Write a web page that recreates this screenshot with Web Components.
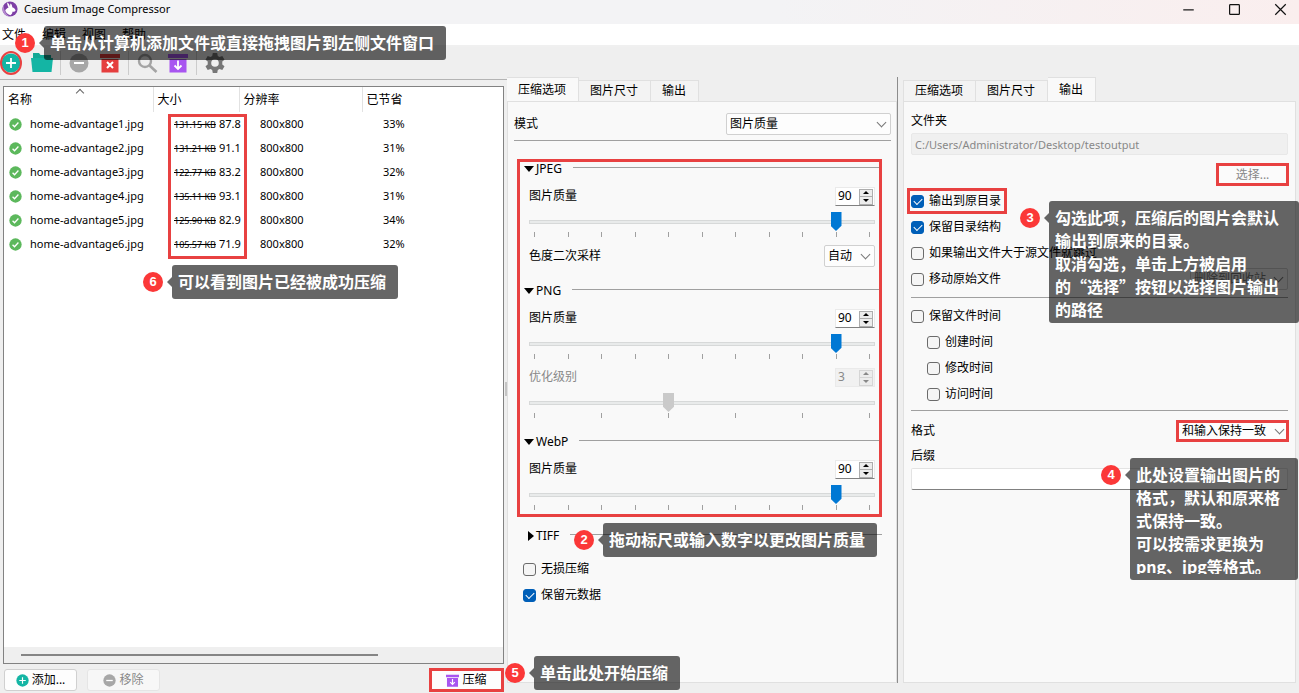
<!DOCTYPE html>
<html lang="zh-CN">
<head>
<meta charset="utf-8">
<title>Caesium Image Compressor</title>
<style>
  body { margin: 0; overflow: hidden; font: 12px/18px "Noto Sans", "Noto Sans CJK SC", sans-serif; color: #000; background: #efefef; }
</style>
</head>
<body>
<app-window></app-window>
<script>
const define = (name, css, html, setup) => customElements.define(name, class extends HTMLElement {
  connectedCallback() {
    if (this.shadowRoot) return;
    const root = this.attachShadow({ mode: "open" });
    const base = `*{box-sizing:border-box} button,input,select{font:inherit;color:inherit;margin:0;padding:0}
      .red{border:3px solid #e84141}`;
    root.innerHTML = `<style>${base}${css}</style>${typeof html === "function" ? html(this) : html}`;
    if (setup) setup(root, this);
  }
});

const icons = {
  logo: `<circle cx="10" cy="10" r="9.500" fill="#7d3fa6"/><path d="M2 5a9.500 9.500 0 000 10 9.500 9.500 0 008 4.500c-4-2-8-7-8-14.500z" fill="#b58bd0"/><path d="M6.500 1.500c2 1.500 3.200 3.500 3.500 5.500.3-1.800 0-3 .8-4 1.500 1.200 2 3 2 4.800 2 .6 4 2.200 4.200 4-.8 1.500-2.500 1.700-4 1.700.2 2-.8 3.500-2.500 4.300-3-.5-5.500-2.800-6.500-5.800.8-2 2.500-3.500 4.200-4-1.200-2-1.900-4.500-1.700-6.500z" fill="#fff"/>`,
  add: `<circle cx="10" cy="10" r="9.5" fill="#14b5a4"/><path d="M10 5v10M5 10h10" stroke="#fff" stroke-width="1.8"/>`,
  folder: `<path d="M1 0h6l1.500 2h10.500v4h-18z" fill="#12a896"/><path d="M-1 5h22l-1.500 14h-19z" fill="#14b5a4"/>`,
  minus: `<circle cx="10" cy="10" r="9.500" fill="#a7a7a7"/><path d="M5 10h10" stroke="#fff" stroke-width="2"/>`,
  clear: `<path d="M0 1h20v4H0zM1.500 6h17v13.500h-17z" fill="#e53e3e"/><path d="M7 9l6 6M13 9l-6 6" stroke="#fff" stroke-width="2"/>`,
  search: `<circle cx="8" cy="8" r="6" fill="none" stroke="#a4a4a4" stroke-width="2.400"/><path d="M12.500 12.500l7 6.500" stroke="#a4a4a4" stroke-width="2.600"/>`,
  down: `<path d="M0 1h20v4H0zM1.500 6h17v13.500h-17z" fill="#a855f0"/><path d="M10 7.500v8M6.500 12.500l3.500 3.500 3.500-3.500" fill="none" stroke="#fff" stroke-width="1.800"/>`,
  gear: `<path fill="#777" fill-rule="evenodd" d="M7.800 0h4.400l.6 2.900 1.700 1 2.800-1 2.200 3.800-2.200 1.900v2.800l2.200 1.900-2.200 3.800-2.800-1-1.700 1-.6 2.900H7.800l-.6-2.900-1.700-1-2.800 1L.5 13.300l2.200-1.900V8.600L.5 6.700l2.200-3.800 2.800 1 1.700-1zM10 6.200a3.800 3.800 0 100 7.600 3.800 3.800 0 000-7.600z"/>`,
  done: `<circle cx="10" cy="10" r="9.500" fill="#5cb85c"/><path d="M5.500 10.500l3 3 6-6.500" fill="none" stroke="#fff" stroke-width="2"/>`,
  min: `<path d="M3 10.500h14" stroke="#111" stroke-width="1.600"/>`,
  max: `<rect x="3.500" y="3.500" width="13" height="13" rx="1" fill="none" stroke="#111" stroke-width="1.600"/>`,
  close: `<path d="M3 3l14 14M17 3L3 17" stroke="#111" stroke-width="1.600"/>`
};
define("ui-icon", `:host{display:inline-block;flex:none;width:20px;height:20px} svg{display:block;width:100%;height:100%;overflow:visible}`,
  h => `<svg viewBox="0 0 20 20" aria-hidden="true">${icons[h.getAttribute("name")]}</svg>`);

/* numbered badge with a translucent speech bubble */
define("call-out", `:host{position:absolute;z-index:5;display:flex;gap:9px;font:bold 16px/23px "Noto Sans CJK SC",sans-serif;color:#fff;white-space:nowrap}
  .n{width:20px;height:20px;margin-top:7px;border-radius:50%;background:#fb3838;font:bold 13px/20px "Liberation Sans",sans-serif;text-align:center}
  .b{position:relative;min-height:34px;padding:5px 12px 6px 6px;border-radius:3px;background:rgba(0,0,0,.6)}
  .b::before{content:"";position:absolute;left:-5px;top:12px;border:5px solid transparent;border-left:0;border-right-color:rgba(0,0,0,.6)}
  .t{overflow:hidden}
  :host([tall]) .b{width:250px;padding-bottom:2px}
  :host([clipped]) .b{width:168px}
  :host([clipped]) .t{height:111px}`,
  h => `<span class="n">${h.getAttribute("n")}</span><div class="b"><div class="t"><slot></slot></div></div>`);

define("title-bar", `:host{display:flex;align-items:center;height:24px;padding:0 11px 6px 2px;background:linear-gradient(90deg,#f3f3f5 60%,#faeeee)}
  span{flex:1;padding-left:6px;font-size:11px} .w{display:flex;gap:31px} button{border:0;background:none;width:15px;height:15px} .w ui-icon{width:15px;height:15px} .l{width:16px;height:16px}`,
  `<ui-icon class="l" name="logo"></ui-icon><span>Caesium Image Compressor</span><div class="w">
  <button aria-label="最小化"><ui-icon name="min"></ui-icon></button><button aria-label="最大化"><ui-icon name="max"></ui-icon></button><button aria-label="关闭"><ui-icon name="close"></ui-icon></button></div>`);

define("menu-bar", `:host{display:flex;gap:16px;height:23px;padding:2px 2px 0;background:#fff;border-bottom:2px solid #f0f0f0} button{border:0;background:none;height:18px}`,
  `<button>文件</button><button>编辑</button><button>视图</button><button>帮助</button>`);

define("tool-bar", `:host{display:flex;align-items:center;height:30px;padding-top:2px}
  button{position:relative;border:0;background:none;display:flex;width:20px;height:20px;margin-left:11px}
  button.first{margin-left:1px} .first::after{content:"";position:absolute;inset:-2px -1px;border:2px solid #e84141;border-radius:50%}
  i{width:1px;height:24px;margin-left:8px;background:#ccc} i+button{margin-left:8px}`,
  `<button class="first" aria-label="添加文件"><ui-icon name="add"></ui-icon></button><button aria-label="添加文件夹"><ui-icon name="folder"></ui-icon></button><i></i>
  <button aria-label="移除"><ui-icon name="minus"></ui-icon></button><button aria-label="清空"><ui-icon name="clear"></ui-icon></button><i></i>
  <button aria-label="预览"><ui-icon name="search"></ui-icon></button><button aria-label="压缩"><ui-icon name="down"></ui-icon></button><i></i>
  <button aria-label="设置"><ui-icon name="gear"></ui-icon></button>`);

const files = [["131.15", "87.8", 33], ["131.21", "91.1", 31], ["122.77", "83.2", 32], ["135.11", "93.1", 31], ["125.90", "82.9", 34], ["105.57", "71.9", 32]];
define("file-list", `:host{position:relative;display:flex;flex-direction:column;flex:1;background:#fff;border:1px solid #828282}
  table{table-layout:fixed;width:100%;border-collapse:collapse}
  th{position:relative;height:25px;padding:0 0 0 4px;text-align:left;font-weight:400;border-right:1px solid #e2e2e2} th:last-child{border:0}
  .sort::after{content:"";position:absolute;left:73px;top:3px;width:5px;height:5px;border:solid #666;border-width:1px 0 0 1px;transform:rotate(45deg)}
  td{height:24px;padding:0 0 0 21px;white-space:nowrap;font-size:11px} td:first-child{padding-left:5px}
  .f{display:flex;align-items:center;gap:8px} .f ui-icon{width:13px;height:13px}
  s{font-size:9px;margin-right:3px}
  .mark{position:absolute;left:164px;top:27px;width:79px;height:145px}
  .bar{margin-top:auto;height:16px;padding:7px 0 0 17px;background:#efefef} .bar div{width:357px;height:2px;background:#858585}`,
  `<table><colgroup><col style="width:149px"><col style="width:86px"><col style="width:123px"><col></colgroup>
  <thead><tr><th class="sort">名称</th><th>大小</th><th>分辨率</th><th>已节省</th></tr></thead><tbody>` +
  files.map((f, i) => `<tr><td><span class="f"><ui-icon name="done"></ui-icon>home-advantage${i + 1}.jpg</span></td><td><s>${f[0]} KB</s>${f[1]}</td><td>800x800</td><td>${f[2]}%</td></tr>`).join("") +
  `</tbody></table><div class="mark red"></div><div class="bar"><div></div></div><call-out n="6" style="left:139px;top:178px">可以看到图片已经被成功压缩</call-out>`);

define("list-column", `:host{position:relative;display:flex;flex-direction:column;flex:501 1 6px;min-width:0;margin-top:2px;padding:6px 3px 0;border-top:1px solid #b4b4b4}
  footer{display:flex;gap:10px;padding:4px 0 1px 1px;height:29px;align-items:center}
  button{display:flex;align-items:center;justify-content:center;gap:3px;width:73px;height:22px;background:#fdfdfd;border:1px solid #d0d0d0;border-radius:3px}
  button ui-icon{width:13px;height:13px} button:disabled{color:#888;background:#f7f7f7;border-color:#e5e5e5}
  .go{margin-left:auto;width:75px;height:24px;border:3px solid #e84141;border-radius:0}
  .grip{position:absolute;right:0;top:302px;width:2px;height:14px;background:#c4c4c4}`,
  `<file-list></file-list><footer><button><ui-icon name="add"></ui-icon>添加...</button><button disabled><ui-icon name="minus"></ui-icon>移除</button><button class="go"><ui-icon name="down"></ui-icon>压缩</button></footer>
  <div class="grip"></div><call-out n="5" style="left:505px;bottom:3px">单击此处开始压缩</call-out>`);

define("tab-panel", `:host{display:flex;flex-direction:column;min-width:0}
  nav{display:flex;align-items:flex-end;height:24px}
  button{height:21px;padding:0 12px 0 11px;border:1px solid #e0e0e0;border-left-width:0;border-bottom:0;background:#f3f3f3}
  button:first-child{border-left-width:var(--edge,0)}
  button[aria-selected=true]{height:25px;margin-bottom:-1px;background:#f9f9f9;position:relative}
  .p{flex:1;position:relative;border:1px solid #e0e0e0;background:#f9f9f9}`,
  h => `<nav role="tablist">${["压缩选项", "图片尺寸", "输出"].map((t, i) => `<button role="tab" aria-selected="${i == h.getAttribute("active")}">${t}</button>`).join("")}</nav><div class="p"><slot></slot></div>`);

define("drop-down", `:host{display:flex;align-items:center;justify-content:space-between}
  span{position:relative;width:var(--w)} select{appearance:none;display:block;width:100%;height:22px;padding:0 3px;border:1px solid #d0d0d0;border-radius:2px;background:#fdfdfd;line-height:20px}
  select.red{border:3px solid #e84141;border-radius:0;line-height:16px} select:disabled{opacity:1;color:#777;background:#f7f7f7}
  span::after{content:"";position:absolute;right:6px;top:6px;width:6px;height:6px;border:solid #777;border-width:0 1px 1px 0;transform:rotate(45deg);pointer-events:none}`,
  h => `<label for="s">${h.getAttribute("label") || ""}</label><span><select id="s" aria-label="${h.getAttribute("label") || "移动方式"}" class="${h.hasAttribute("marked") ? "red" : ""}" ${h.hasAttribute("disabled") ? "disabled" : ""}><option>${h.getAttribute("value")}</option></select></span>`);

define("check-box", `:host{display:flex;align-items:center;height:26px}
  label{display:flex;align-items:center;gap:5px;white-space:nowrap}
  label.red{margin:0 0 0 -4px;padding:0 3px 0 1px;height:26px}
  input{appearance:none;position:relative;width:13px;height:13px;border:1px solid #6b6b6b;border-radius:3px;background:#f5f5f5}
  input:checked{background:#005fb8;border-color:#005fb8}
  input:checked::after{content:"";position:absolute;left:2px;top:2px;width:7px;height:4px;border:solid #fff;border-width:0 0 1px 1px;transform:rotate(-45deg)}`,
  h => `<label class="${h.hasAttribute("marked") ? "red" : ""}"><input type="checkbox" ${h.hasAttribute("checked") ? "checked" : ""}><slot></slot></label>`);

/* label and number box over a range input with tick marks */
define("quality-control", `:host{display:block} .r{display:flex;align-items:center;justify-content:space-between;height:20px}
  .s{display:flex;width:40px;height:19px;background:#fff;border:1px solid #eaeaea;border-bottom-color:#808080}
  input[type=number]{appearance:textfield;flex:1;min-width:0;border:0;background:none;padding-left:2px;outline:0}
  input::-webkit-inner-spin-button{appearance:none;display:none}
  .b{display:flex;flex-direction:column;width:15px;padding:1px 1px 0 0} .b button{flex:1;border:1px solid #adadad;background:#ececec;display:flex;align-items:center;justify-content:center}
  .b button+button{border-top:0} .b button::after{content:"";border:3px solid transparent;border-top:0;border-bottom-color:currentColor} .b button+button::after{transform:rotate(180deg)}
  input[type=range]{appearance:none;display:block;width:100%;height:19px;margin-top:6px;background:linear-gradient(#e9ebeb,#e9ebeb) center/calc(100% - 2px) 2px no-repeat,linear-gradient(#d7d9d9,#d7d9d9) center/100% 4px no-repeat}
  input::-webkit-slider-thumb{appearance:none;width:11px;height:19px;background:var(--c,#0078d4);clip-path:polygon(0 0,100% 0,100% 72%,50% 100%,0 72%)}
  .t{display:flex;justify-content:space-between;height:6px;padding:1px 5px 0} i{width:1px;background:#a0a0a0}
  :host([disabled]){--c:#cacaca;color:#888} :host([disabled]) .s{background:#f1f1f1;border-color:#eaeaea} :host([disabled]) .b button{border-color:#d5d5d5}`,
  h => { const g = (a, d) => h.getAttribute(a) || d, d = h.hasAttribute("disabled") ? "disabled" : "", m = `min="${g("min", 0)}" max="${g("max", 100)}" value="${g("value", 90)}"`;
    return `<div class="r"><label for="n">${g("label")}</label><div class="s"><input id="n" type="number" ${m} ${d}><div class="b"><button aria-label="增加" ${d}></button><button aria-label="减少" ${d}></button></div></div></div>
    <input type="range" aria-label="${g("label")}" ${m} ${d}><div class="t">${"<i></i>".repeat(g("ticks", 11))}</div>`; },
  root => { const [n, r] = root.querySelectorAll("input"), [u, d] = root.querySelectorAll("button");
    n.oninput = () => r.value = n.value; r.oninput = () => n.value = r.value;
    u.onclick = () => { n.stepUp(); r.value = n.value; }; d.onclick = () => { n.stepDown(); r.value = n.value; }; });

define("option-group", `:host{display:block} button{display:flex;align-items:center;width:100%;height:14px;border:0;background:none;padding-left:4px;line-height:14px}
  button::before{content:"";margin-right:2px;border:5px solid transparent;border-bottom:0;border-top:6px solid #000}
  :host([closed]) button::before{border:5px solid transparent;border-right:0;border-left:6px solid #000;margin-left:2px}
  button::after{content:"";flex:1;height:1px;margin:0 0 4px 11px;background:#a0a0a0}
  .c{padding:10px 4px 0 9px} :host([closed]) .c{display:none}`,
  h => `<button aria-expanded="${!h.hasAttribute("closed")}">${h.getAttribute("name")}</button><div class="c"><slot></slot></div>`,
  (root, h) => root.querySelector("button").onclick = () => h.toggleAttribute("closed"));

define("compress-options", `:host{display:block;padding:11px 5px 0 6px}
  .mode{--w:165px} hr{height:1px;border:0;margin:5px 0 18px;background:#a0a0a0}
  section{margin:0 9px 0 3px;padding-bottom:4px} option-group+option-group{margin-top:17px}
  .sub{--w:51px;margin-top:8px} .lvl{margin-top:8px}
  .tiff{margin:12px 9px 0 8px} .checks{margin:13px 0 0 9px}`,
  `<drop-down class="mode" label="模式" value="图片质量"></drop-down><hr>
  <section class="red"><option-group name="JPEG"><quality-control label="图片质量"></quality-control><drop-down class="sub" label="色度二次采样" value="自动"></drop-down></option-group>
  <option-group name="PNG"><quality-control label="图片质量"></quality-control><quality-control class="lvl" label="优化级别" min="1" max="6" value="3" ticks="6" disabled></quality-control></option-group>
  <option-group name="WebP"><quality-control label="图片质量"></quality-control></option-group></section>
  <option-group class="tiff" name="TIFF" closed></option-group>
  <div class="checks"><check-box>无损压缩</check-box><check-box checked>保留元数据</check-box></div>
  <call-out n="2" style="left:66px;top:421px">拖动标尺或输入数字以更改图片质量</call-out>`);

define("output-options", `:host{display:block;padding:10px 7px 0 7px}
  label{display:block} input{display:block;width:100%;height:22px;margin:3px 0 0;padding:0 3px;border:1px solid #e3e3e3;background:#fff;border-bottom-color:#808080;border-radius:2px;outline:0}
  input:disabled{background:#f0f0f0;color:#888;border-color:#e8e8e8;font-size:11px}
  .pick{display:block;width:73px;height:23px;margin:8px -1px 2px auto;background:#fbfbfb;color:#888;line-height:16px}
  hr{height:1px;border:0;margin:5px 0;background:#a0a0a0} .in{margin-left:16px} .in+hr{margin-top:3px}
  .move{display:flex;justify-content:space-between;align-items:center} .move drop-down{--w:98px}
  .fmt{--w:113px;margin:9px -1px 5px 0}`,
  `<label for="dir">文件夹</label><input id="dir" disabled value="C:/Users/Administrator/Desktop/testoutput"><button class="pick red">选择...</button>
  <check-box checked marked>输出到原目录</check-box><check-box checked>保留目录结构</check-box><check-box>如果输出文件大于源文件就跳过</check-box>
  <div class="move"><check-box>移动原始文件</check-box><drop-down value="删除到回收站" disabled></drop-down></div><hr>
  <check-box>保留文件时间</check-box><div class="in"><check-box>创建时间</check-box><check-box>修改时间</check-box><check-box>访问时间</check-box></div><hr>
  <drop-down class="fmt" marked label="格式" value="和输入保持一致"></drop-down>
  <label for="suffix">后缀</label><input id="suffix">
  <call-out n="3" tall style="left:116px;top:99px">勾选此项，压缩后的图片会默认<br>输出到原来的目录。<br>取消勾选，单击上方被启用<br>的“选择”按钮以选择图片输出<br>的路径</call-out>
  <call-out n="4" clipped style="left:197px;top:356px">此处设置输出图片的<br>格式，默认和原来格<br>式保持一致。<br>可以按需求更换为<br>png、jpg等格式。</call-out>`);

define("app-window", `:host{position:relative;display:flex;flex-direction:column;min-height:100vh}
  main{display:flex;flex:1} .mid{flex:390 1 1px;margin-bottom:10px;border-right:1px solid #8c8c8c} .out{flex:393 1 8px;--edge:1px;padding:0 3px 0 5px;margin-bottom:10px}`,
  `<title-bar></title-bar><menu-bar></menu-bar><tool-bar></tool-bar>
  <main><list-column></list-column><tab-panel class="mid" active="0"><compress-options></compress-options></tab-panel><tab-panel class="out" active="2"><output-options></output-options></tab-panel></main>
  <call-out n="1" style="left:15px;top:26px">单击从计算机添加文件或直接拖拽图片到左侧文件窗口</call-out>`);
</script>
</body>
</html>
